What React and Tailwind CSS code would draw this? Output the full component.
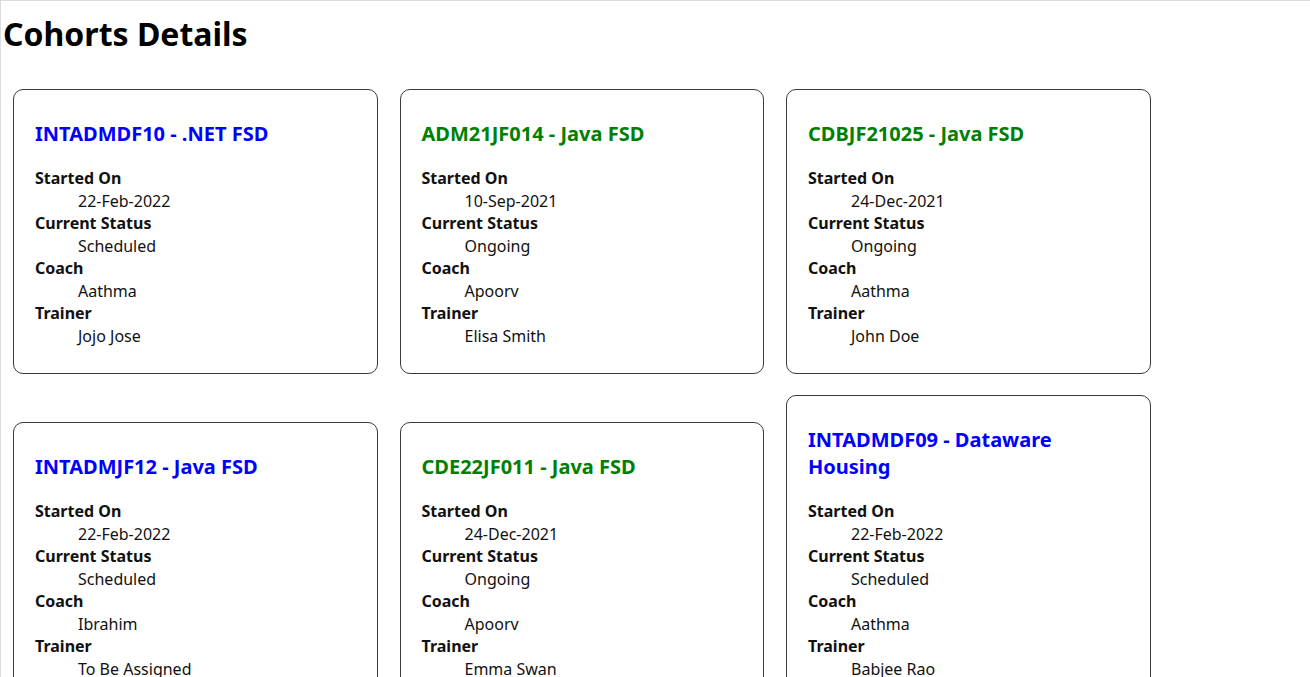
import React from 'react';

const cohorts = [
  { code: 'INTADMDF10', name: '.NET FSD', started: '22-Feb-2022', status: 'Scheduled', coach: 'Aathma', trainer: 'Jojo Jose' },
  { code: 'ADM21JF014', name: 'Java FSD', started: '10-Sep-2021', status: 'Ongoing', coach: 'Apoorv', trainer: 'Elisa Smith' },
  { code: 'CDBJF21025', name: 'Java FSD', started: '24-Dec-2021', status: 'Ongoing', coach: 'Aathma', trainer: 'John Doe' },
  { code: 'INTADMJF12', name: 'Java FSD', started: '22-Feb-2022', status: 'Scheduled', coach: 'Ibrahim', trainer: 'To Be Assigned' },
  { code: 'CDE22JF011', name: 'Java FSD', started: '24-Dec-2021', status: 'Ongoing', coach: 'Apoorv', trainer: 'Emma Swan' },
  { code: 'INTADMDF09', name: 'Dataware Housing', started: '22-Feb-2022', status: 'Scheduled', coach: 'Aathma', trainer: 'Babjee Rao' },
];

const CohortCard = ({ cohort }) => {
  const titleColor = cohort.status === 'Ongoing' ? 'text-[#008000]' : 'text-[#0000ff]';
  const rows = [
    ['Started On', cohort.started],
    ['Current Status', cohort.status],
    ['Coach', cohort.coach],
    ['Trainer', cohort.trainer],
  ];

  return (
    <div className="w-[364.5px] rounded-[10px] border border-[#3a3a3a] px-[21px] pt-[30px] pb-[26px]">
      <h3 className={`text-[20px] font-bold leading-[27px] ${titleColor}`}>
        {cohort.code} - {cohort.name}
      </h3>
      <dl className="mt-[20px] text-[16px] leading-[22.5px] text-[#111]">
        {rows.map(([label, value]) => (
          <React.Fragment key={label}>
            <dt className="font-bold">{label}</dt>
            <dd className="ml-[43px]">{value}</dd>
          </React.Fragment>
        ))}
      </dl>
    </div>
  );
};

export default function App() {
  return (
    <div
      className="min-h-[677px] border-t border-l border-[#dcdcdc] bg-white text-black"
      style={{ fontFamily: '"Noto Sans", "Open Sans", Arial, sans-serif' }}
    >
      <h1 className="pl-[2px] pt-[12px] text-[32px] font-bold leading-[42px]">Cohorts Details</h1>
      <div className="mt-[34px] flex flex-wrap items-end gap-x-[22px] gap-y-[21px] pl-[12px]">
        {cohorts.map((c) => (
          <CohortCard key={c.code} cohort={c} />
        ))}
      </div>
    </div>
  );
}
